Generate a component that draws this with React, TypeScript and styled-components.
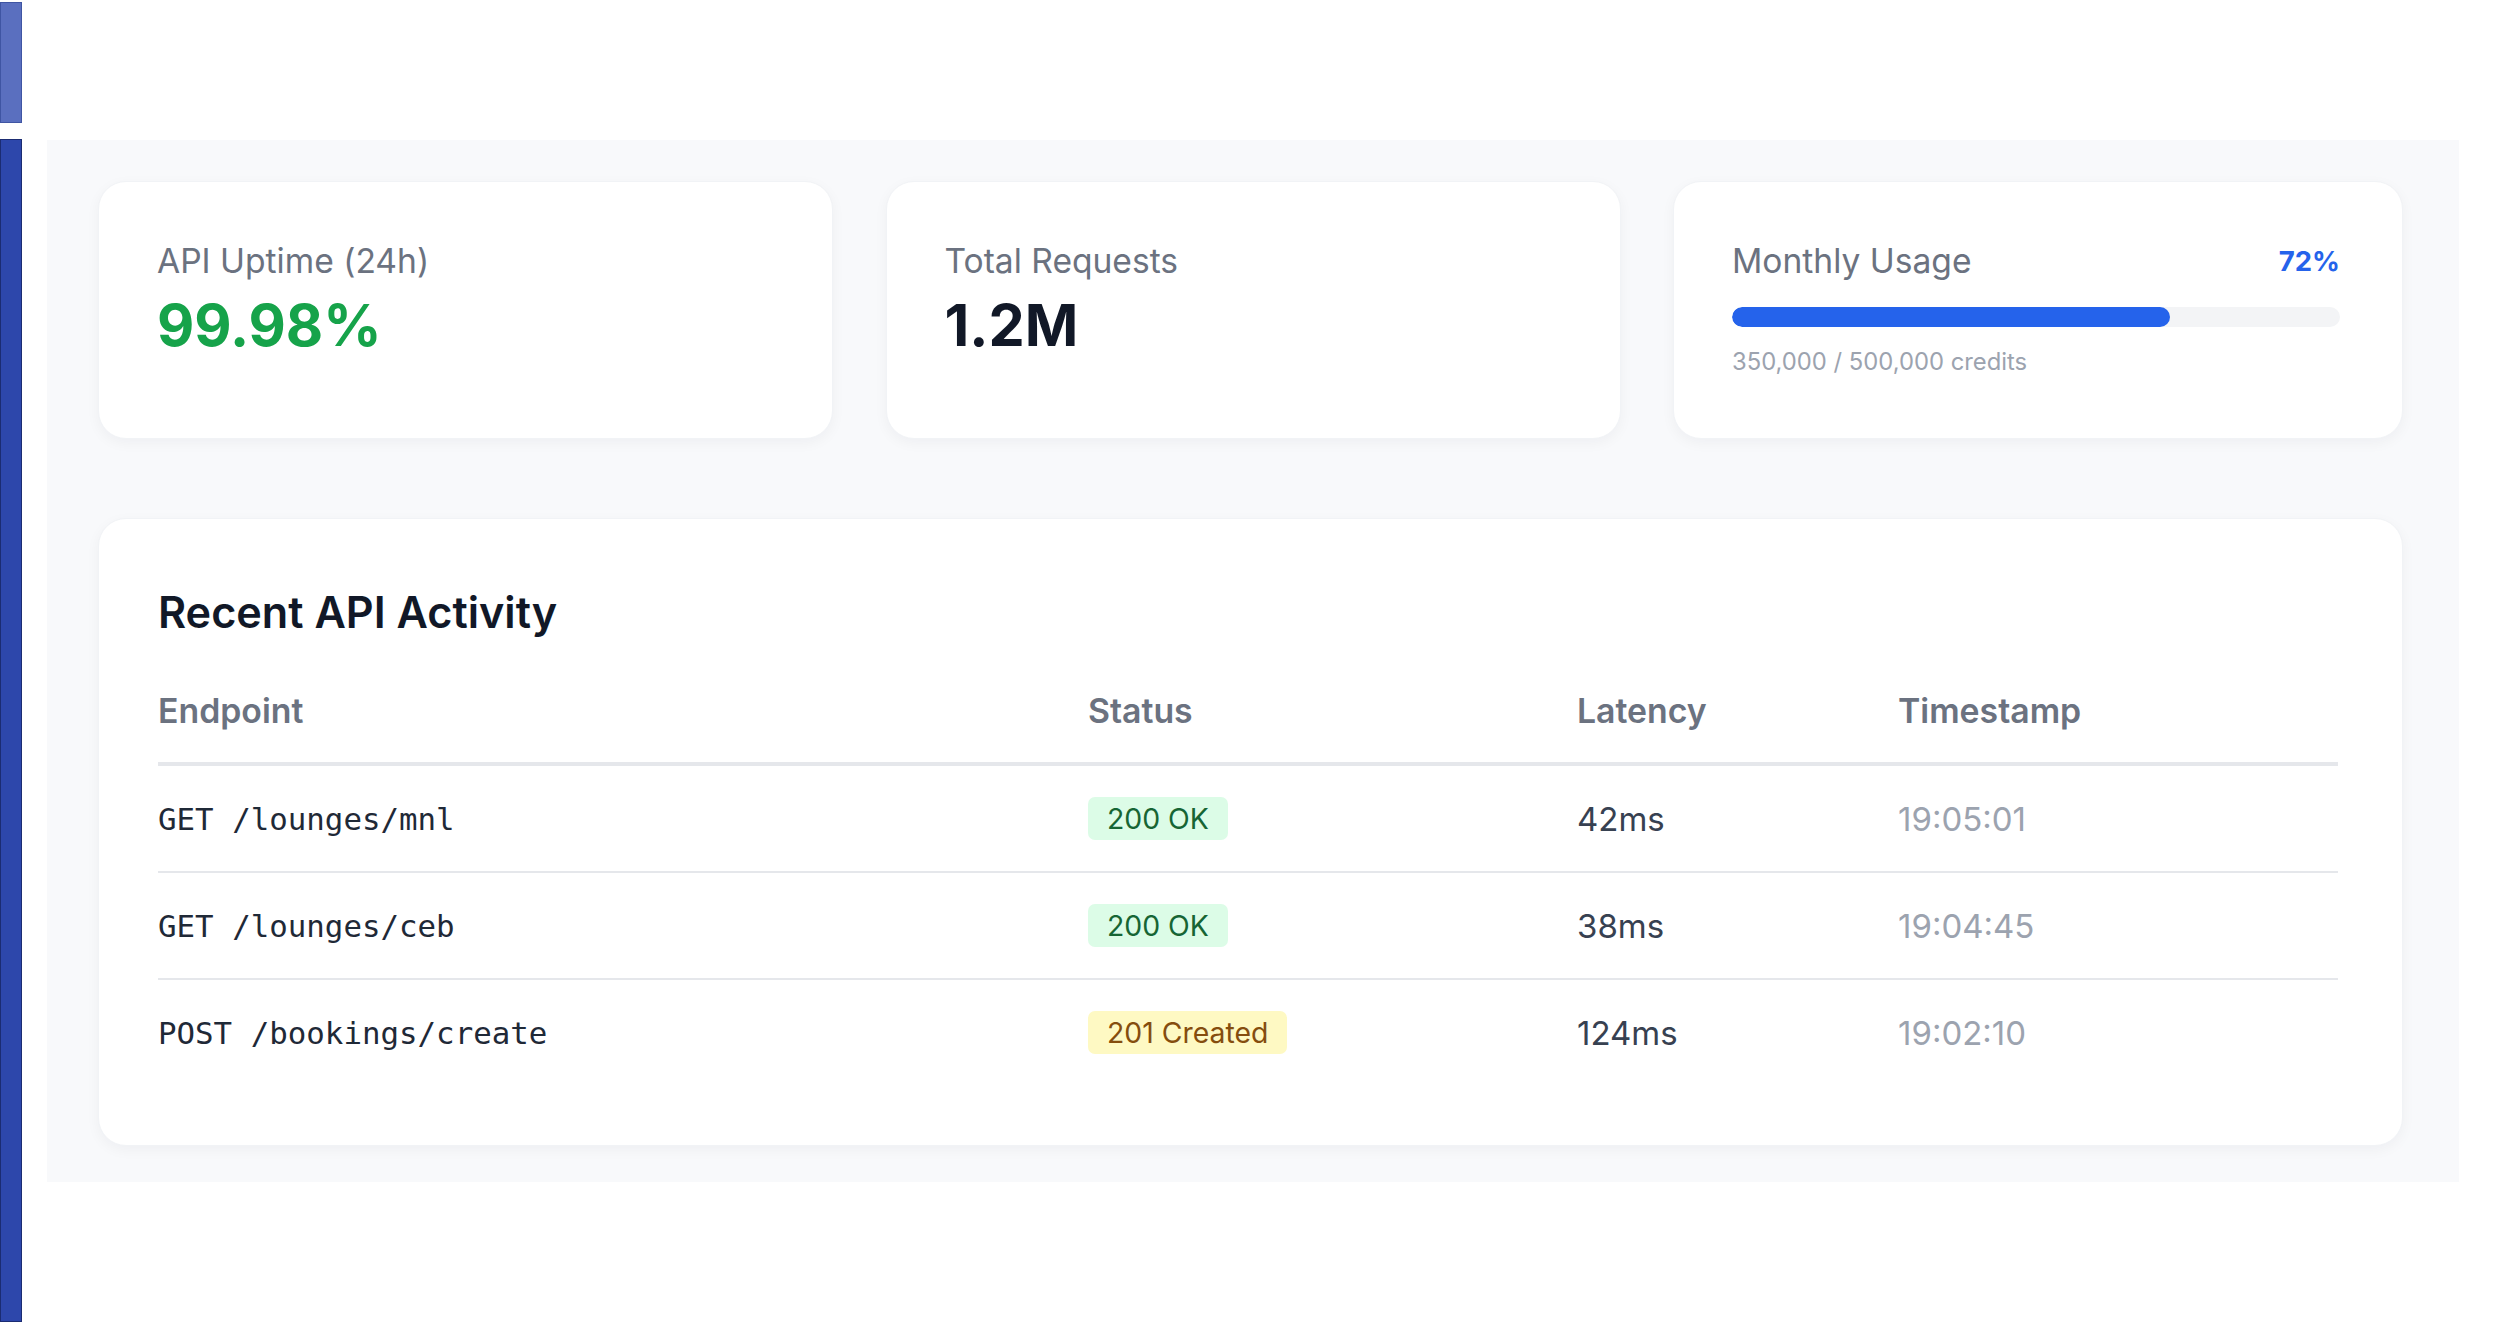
import * as React from "react";
import styled, { createGlobalStyle } from "styled-components";

const GlobalStyle = createGlobalStyle`
  html, body {
    margin: 0;
    padding: 0;
    background: #ffffff;
    font-family: Inter, "Noto Sans", sans-serif;
  }
`;

const Page = styled.div`
  display: flex;
  width: 2507px;
  height: 1322px;
  overflow: hidden;
  background: #ffffff;
`;

const Stripe = styled.div`
  width: 22px;
  display: flex;
  flex-direction: column;
  gap: 16px;
  padding-top: 2px;
  box-sizing: border-box;
  flex-shrink: 0;
`;

const StripeBlock = styled.div<{ tone: "light" | "dark" }>`
  box-sizing: border-box;
  background: ${(p) => (p.tone === "light" ? "#5a6fbf" : "#2d47ab")};
  border: 1px solid ${(p) => (p.tone === "light" ? "#3f55a3" : "#1b2c72")};
  height: ${(p) => (p.tone === "light" ? "121px" : "auto")};
  flex: ${(p) => (p.tone === "light" ? "0 0 auto" : "1")};
`;

const Main = styled.div`
  padding: 140px 0 0 25px;
`;

const Panel = styled.section`
  width: 2412px;
  height: 1042px;
  box-sizing: border-box;
  background: #f8f9fb;
  padding: 41px 56px 0 51px;
`;

const StatGrid = styled.div`
  display: grid;
  grid-template-columns: 735px 735px 730px;
  justify-content: space-between;
  margin-bottom: 79px;
`;

const Card = styled.div`
  background: #ffffff;
  border-radius: 28px;
  border: 1px solid #f1f3f6;
  box-shadow: 0 4px 14px rgba(15, 23, 42, 0.045);
  box-sizing: border-box;
`;

const StatCard = styled(Card)`
  padding: 55px 62px 60px 58px;
`;

const StatHead = styled.div`
  display: flex;
  justify-content: space-between;
  align-items: center;
`;

const StatLabel = styled.div`
  font-size: 33.6px;
  line-height: 48px;
  color: #6b7280;
`;

const StatValue = styled.div<{ color: string }>`
  margin-top: 7px;
  font-size: 57.5px;
  line-height: 67px;
  font-weight: 700;
  color: ${(p) => p.color};
`;

const Percent = styled.div`
  font-size: 27.5px;
  font-weight: 700;
  color: #2563eb;
`;

const Track = styled.div`
  margin-top: 22px;
  height: 20px;
  border-radius: 10px;
  background: #f3f4f6;
  overflow: hidden;
`;

const Fill = styled.div`
  height: 100%;
  border-radius: 10px;
  background: #2563eb;
`;

const Credits = styled.div`
  margin-top: 18px;
  font-size: 23.8px;
  line-height: 33px;
  color: #9ca3af;
`;

const TableCard = styled(Card)`
  padding: 66px 64px 60px 59px;
`;

const Title = styled.h2`
  margin: 0 0 15px;
  font-size: 43.2px;
  line-height: 55px;
  font-weight: 600;
  color: #111827;
`;

const Row = styled.div<{ head?: boolean }>`
  display: grid;
  grid-template-columns: 930px 489px 321px 1fr;
  align-items: center;
  height: ${(p) => (p.head ? "auto" : "105px")};
  padding: ${(p) => (p.head ? "32px 0 27px" : "0")};
  border-bottom: ${(p) => (p.head ? "2px solid #e5e7eb" : "none")};
  & + & {
    border-top: ${(p) => (p.head ? "none" : "2px solid #e5e7eb")};
  }
`;

const HeadCell = styled.div`
  font-size: 33.8px;
  line-height: 48px;
  font-weight: 600;
  color: #6b7280;
`;

const Endpoint = styled.div`
  font-family: "DejaVu Sans Mono", "Liberation Mono", monospace;
  font-size: 30.8px;
  color: #1f2937;
  white-space: pre;
`;

const Badge = styled.span<{ kind: "ok" | "created" }>`
  display: inline-flex;
  align-items: center;
  height: 43px;
  padding: 0 19px;
  border-radius: 7px;
  font-size: 28.4px;
  background: ${(p) => (p.kind === "ok" ? "#dcfce7" : "#fef9c3")};
  color: ${(p) => (p.kind === "ok" ? "#166534" : "#854d0e")};
`;

const Cell = styled.div<{ muted?: boolean }>`
  font-size: 33px;
  color: ${(p) => (p.muted ? "#9ca3af" : "#374151")};
`;

const rows = [
  { endpoint: "GET /lounges/mnl", status: "200 OK", kind: "ok" as const, latency: "42ms", time: "19:05:01" },
  { endpoint: "GET /lounges/ceb", status: "200 OK", kind: "ok" as const, latency: "38ms", time: "19:04:45" },
  { endpoint: "POST /bookings/create", status: "201 Created", kind: "created" as const, latency: "124ms", time: "19:02:10" },
];

const usagePct = 72;

export default function App() {
  return (
    <Page>
      <GlobalStyle />
      <Stripe>
        <StripeBlock tone="light" />
        <StripeBlock tone="dark" />
      </Stripe>
      <Main>
        <Panel>
          <StatGrid>
            <StatCard>
              <StatLabel>API Uptime (24h)</StatLabel>
              <StatValue color="#16a34a">99.98%</StatValue>
            </StatCard>
            <StatCard>
              <StatLabel>Total Requests</StatLabel>
              <StatValue color="#111827">1.2M</StatValue>
            </StatCard>
            <StatCard>
              <StatHead>
                <StatLabel>Monthly Usage</StatLabel>
                <Percent>{usagePct}%</Percent>
              </StatHead>
              <Track>
                <Fill style={{ width: `${usagePct}%` }} />
              </Track>
              <Credits>350,000 / 500,000 credits</Credits>
            </StatCard>
          </StatGrid>

          <TableCard>
            <Title>Recent API Activity</Title>
            <Row head>
              <HeadCell>Endpoint</HeadCell>
              <HeadCell>Status</HeadCell>
              <HeadCell>Latency</HeadCell>
              <HeadCell>Timestamp</HeadCell>
            </Row>
            {rows.map((r) => (
              <Row key={r.endpoint}>
                <Endpoint>{r.endpoint}</Endpoint>
                <div>
                  <Badge kind={r.kind}>{r.status}</Badge>
                </div>
                <Cell>{r.latency}</Cell>
                <Cell muted>{r.time}</Cell>
              </Row>
            ))}
          </TableCard>
        </Panel>
      </Main>
    </Page>
  );
}
